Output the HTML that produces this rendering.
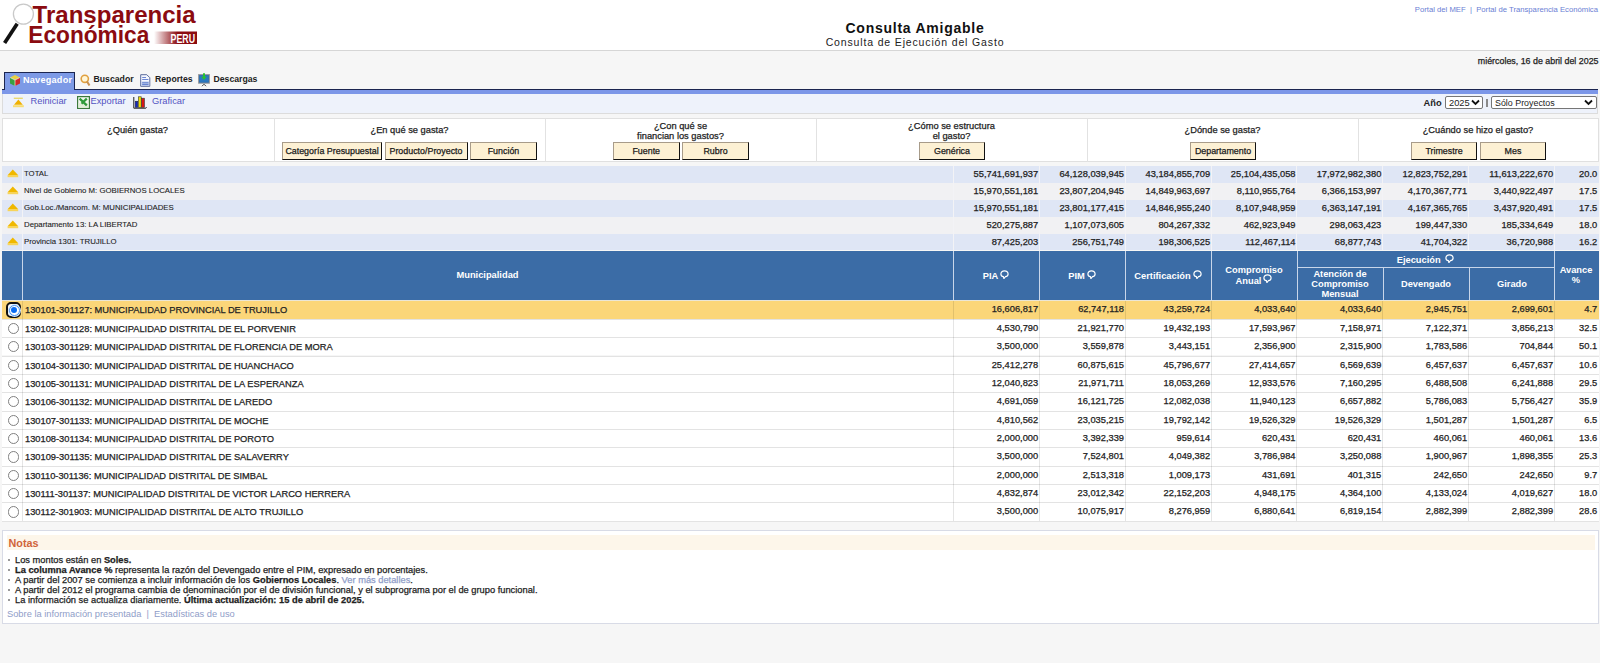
<!DOCTYPE html>
<html><head><meta charset="utf-8"><style>
*{box-sizing:border-box}
html,body{margin:0;padding:0}
body{width:1600px;height:663px;position:relative;overflow:hidden;background:#f6f6f6;font-family:"Liberation Sans",sans-serif;color:#222}
.dlbl,.dnum,.snum,.fq,.btn,.nl,#date{-webkit-text-stroke:0.25px currentColor}
.slbl{-webkit-text-stroke:0.1px currentColor}
.abs{position:absolute}
#hdr{position:absolute;left:0;top:0;width:1600px;height:51px;background:#fff;border-bottom:1px solid #d6d6d6}
#title{position:absolute;left:815px;width:200px;top:19.5px;text-align:center;font-weight:bold;font-size:14px;letter-spacing:0.75px;color:#111}
#subtitle{position:absolute;left:765px;width:300px;top:36px;text-align:center;font-size:10.5px;letter-spacing:0.85px;color:#222}
#links{position:absolute;right:2px;top:4.6px;font-size:7.7px;color:#6a7ed4}
#date{position:absolute;right:1.5px;top:56px;font-size:8.87px;color:#222}
.tab{position:absolute;top:72px;height:18px;font-size:8.7px;font-weight:bold;line-height:15px;color:#222}
#tabnav{left:4px;width:71px;background:#7d9ae6;font-size:9.1px;letter-spacing:0.25px;border:1px solid #1b2550;border-bottom:none;color:#fff}
#tabline{position:absolute;left:2px;top:89px;width:1596px;height:1px;background:#1b2550}
#band{position:absolute;left:2px;top:90px;width:1596px;height:3.5px;background:#7b96e8}
#toolbar{position:absolute;left:2px;top:93.5px;width:1596px;height:20px;background:#eef2fb;border:1px solid #dcdcdc;border-top:none}
.tl{position:absolute;top:95px;font-size:9.3px;color:#5252c2;line-height:12px}
#filters{position:absolute;left:2px;top:118px;width:1596.5px;height:43.5px;background:#fff;border:1px solid #e0e0e0}
.fsep{position:absolute;top:118px;height:43.5px;width:1px;background:#e2e2e2}
.fq{position:absolute;top:124px;text-align:center;font-size:9.3px;line-height:10px;color:#222}
.btn{position:absolute;top:141.5px;height:18.5px;background:#fdf1d4;border:1px solid;border-color:#a89c8a #111 #111 #a89c8a;font-size:8.9px;text-align:center;line-height:16px;color:#1a1a1a}
.srow{position:absolute;left:2px;width:1596.5px}
.sico{position:absolute;left:7.5px;width:11px;height:6px}
.sico:before{content:"";position:absolute;left:0;top:0;border-left:5.5px solid transparent;border-right:5.5px solid transparent;border-bottom:4px solid #f0b400}
.sico:after{content:"";position:absolute;left:0;top:4.5px;width:11px;height:1.8px;background:#f0b400}
.slbl{position:absolute;left:24px;font-size:7.8px;color:#222}
.snum{position:absolute;text-align:right;padding-right:1.3px;font-size:9.3px;color:#222}
.svl{position:absolute;top:166.3px;height:84px;width:1px;background:#f3f3f6}
.drow{position:absolute;left:2px;width:1596.5px}
.dlbl{position:absolute;left:25px;font-size:9.3px;color:#222}
.dnum{position:absolute;text-align:right;padding-right:1.3px;font-size:9.3px;color:#222}
.dvl{position:absolute;top:300.4px;height:220.4px;width:1px;background:rgba(0,0,0,0.1)}
.radio{position:absolute;left:7.8px;width:11.2px;height:11.2px;border-radius:50%;border:1px solid #808080;background:#fff}
.radio.sel{left:6.2px;width:15.2px;height:15.2px;border-radius:5px;border:2.3px solid #111;background:#fff}
.radio.sel:before{content:"";position:absolute;left:0.6px;top:0.6px;width:9.2px;height:9.2px;border-radius:50%;border:1px solid #4a94ee;box-shadow:0 0 0 1px #cfe6ff;background:#fff}
.radio.sel:after{content:"";position:absolute;left:3.1px;top:3.1px;width:6px;height:6px;border-radius:50%;background:#0a6cf0}
#thead{position:absolute;left:2px;top:250.5px;width:1596.5px;height:50px;background:#3b6ca6}
.th{position:absolute;color:#fff;font-weight:bold;font-size:9.3px;text-align:center;line-height:10px}
.thvl{position:absolute;width:1px;background:#c8d6ea}
#notes{position:absolute;left:2px;top:529.5px;width:1596.5px;height:94px;background:#fff;border:1px solid #d8dbe6}
#nhead{position:absolute;left:6.5px;top:535px;width:1588px;height:15px;background:#fdf6ea}
#ntitle{position:absolute;left:8.5px;top:535.5px;font-size:10.8px;font-weight:bold;color:#d0643a;line-height:14px}
.nl{position:absolute;left:15px;font-size:9.3px;color:#222;line-height:10px;white-space:nowrap}
.nb{position:absolute;left:8px;width:2.2px;height:2.2px;background:#999}
.nlinks{position:absolute;left:7px;top:609px;font-size:9.3px;color:#8f9dc8;line-height:11px;white-space:nowrap}
.bub{display:inline-block;vertical-align:baseline;margin-left:2px;position:relative;top:-0.3px}

</style></head><body>
<div id="hdr"></div>
<!-- logo -->
<svg class="abs" style="left:0;top:0" width="205" height="50" viewBox="0 0 205 50">
  <circle cx="23.4" cy="14.1" r="10" fill="#fff" stroke="#c9c9c9" stroke-width="1.3"/>
  <line x1="17.2" y1="23.8" x2="4.6" y2="43" stroke="#111" stroke-width="3.7" stroke-linecap="butt"/>
  <text x="32.6" y="23.1" font-family="Liberation Sans" font-weight="bold" font-size="24.5" fill="#8b0b10" textLength="163" lengthAdjust="spacingAndGlyphs">Transparencia</text>
  <text x="28.3" y="43.1" font-family="Liberation Sans" font-weight="bold" font-size="24.5" fill="#8b0b10" textLength="121" lengthAdjust="spacingAndGlyphs">Económica</text>
  <defs><linearGradient id="pg" x1="0" x2="1" y1="0" y2="0"><stop offset="0" stop-color="#8b0b10" stop-opacity="0"/><stop offset="0.55" stop-color="#8b0b10" stop-opacity="1"/></linearGradient></defs>
  <rect x="154" y="31.5" width="43" height="12.5" fill="url(#pg)"/>
  <text x="170.6" y="42.6" font-family="Liberation Sans" font-weight="bold" font-size="12" fill="#fff" textLength="24.5" lengthAdjust="spacingAndGlyphs">PERU</text>
</svg>
<div id="title">Consulta Amigable</div>
<div id="subtitle">Consulta de Ejecución del Gasto</div>
<div id="links">Portal del MEF &nbsp;|&nbsp; Portal de Transparencia Económica</div>
<div id="date">miércoles, 16 de abril del 2025</div>

<div id="tabline"></div>
<div id="tabnav" class="tab"><span style="position:absolute;left:18px;top:0">Navegador</span></div>
<!-- navegador cube icon -->
<svg class="abs" style="left:9px;top:74px" width="12" height="13" viewBox="0 0 12 13">
  <polygon points="6,1 11,3.5 6,6 1,3.5" fill="#e8d040"/>
  <polygon points="1,3.5 6,6 6,12 1,9.5" fill="#3aa040"/>
  <polygon points="11,3.5 6,6 6,12 11,9.5" fill="#d02828"/><path d="M6,6 L1.2,3.6 M6,6 L10.8,3.6 M6,6 V12" stroke="#fff" stroke-width="0.7" opacity="0.85"/>
</svg>
<div class="tab" style="left:93.5px">Buscador</div>
<svg class="abs" style="left:80px;top:74px" width="11" height="13" viewBox="0 0 11 13">
  <circle cx="4.8" cy="4.8" r="3.6" fill="#fff6d8" stroke="#e0a040" stroke-width="1.6"/>
  <line x1="7" y1="7.5" x2="9.5" y2="11.5" stroke="#c89050" stroke-width="2"/>
</svg>
<div class="tab" style="left:155px">Reportes</div>
<svg class="abs" style="left:140px;top:74px" width="11" height="13" viewBox="0 0 11 13"><path d="M0.7 0.7 H6.8 L9.8 3.7 V12.3 H0.7 Z" fill="#f4f7ff" stroke="#5a6a9a" stroke-width="1"/><rect x="1.4" y="7.5" width="7.8" height="4.3" fill="#b8c8ec"/><path d="M2.2 3.5 H6 M2.2 5.5 H8.4 M2.2 8.8 H8.4 M2.2 10.6 H8.4" stroke="#4a6ac8" stroke-width="0.8"/></svg>
<div class="tab" style="left:213.5px">Descargas</div>
<svg class="abs" style="left:198px;top:73px" width="12" height="15" viewBox="0 0 12 15"><rect x="0.6" y="1.6" width="10.8" height="8.6" fill="#2c6cb0" stroke="#9a9a9a" stroke-width="1"/><rect x="1.6" y="2.8" width="8.8" height="6" fill="#2a78c0"/><path d="M5 0.2 H7 V3.8 H8.8 L6 7 L3.2 3.8 H5 Z" fill="#28c030"/><path d="M4 13.2 L6 11.2 L8 13.2" stroke="#444" fill="none" stroke-width="1"/></svg>
<div id="band"></div>
<div id="toolbar"></div>
<svg class="abs" style="left:12px;top:97px" width="13" height="12" viewBox="0 0 13 12"><rect x="1.8" y="0.6" width="9" height="1.4" fill="#e8d870"/><polygon points="2,7.7 6.4,2.6 10.8,7.7" fill="#f0b000"/><rect x="1" y="8.2" width="10.8" height="2" fill="#f8dc70"/></svg>
<div class="tl" style="left:30.5px">Reiniciar</div>
<svg class="abs" style="left:77px;top:96px" width="13" height="13" viewBox="0 0 13 13"><rect x="0.6" y="0.6" width="11.8" height="11.8" fill="#f2f8ee" stroke="#3c7a3c" stroke-width="1.2"/><rect x="1.5" y="7" width="10" height="4.8" fill="#e0eed8"/><path d="M2.6 2.6 L9.8 9.4 M9.8 2.6 L4.5 7.6" stroke="#2f9a3a" stroke-width="2.2"/></svg>
<div class="tl" style="left:90.5px">Exportar</div>
<svg class="abs" style="left:133px;top:96px" width="14" height="13" viewBox="0 0 14 13"><path d="M0.8 1 V12.2 H12.8 L13.5 11.2" stroke="#222" fill="none" stroke-width="1"/><rect x="2.2" y="5.2" width="2.6" height="6.2" fill="#1428c8" stroke="#222" stroke-width="0.5"/><rect x="5.4" y="0.8" width="2.8" height="10.6" fill="#f0e000" stroke="#333" stroke-width="0.6"/><rect x="8.6" y="2.2" width="2.8" height="9.2" fill="#d81818" stroke="#333" stroke-width="0.6"/></svg>
<div class="tl" style="left:152px">Graficar</div>
<div class="abs" style="left:1423.5px;top:97px;font-size:9.3px;font-weight:bold;line-height:12px;color:#222">Año</div>
<div class="abs" style="left:1445px;top:95.5px;width:38px;height:13px;background:#fff;border:1px solid #767676;border-radius:2px;font-size:9.3px;line-height:12px;padding-left:3px;color:#222">2025<svg style="position:absolute;right:2.5px;top:2.5px" width="9" height="7" viewBox="0 0 9 7"><polyline points="1,1.5 4.5,5 8,1.5" fill="none" stroke="#111" stroke-width="1.8"/></svg></div>
<div class="abs" style="left:1486px;top:99px;width:2px;height:8px;background:#8a8a8a"></div>
<div class="abs" style="left:1491px;top:95.5px;width:106px;height:13px;background:#fff;border:1px solid #767676;border-radius:2px;font-size:8.9px;line-height:12px;padding-left:3px;color:#222">Sólo Proyectos<svg style="position:absolute;right:3.5px;top:2.5px" width="9" height="7" viewBox="0 0 9 7"><polyline points="1,1.5 4.5,5 8,1.5" fill="none" stroke="#111" stroke-width="1.8"/></svg></div>

<div id="filters"></div>
<div class="fsep" style="left:273.5px"></div>
<div class="fsep" style="left:544.5px"></div>
<div class="fsep" style="left:816px"></div>
<div class="fsep" style="left:1087px"></div>
<div class="fsep" style="left:1358px"></div>
<div class="fq" style="left:2px;width:271px;top:125px">¿Quién gasta?</div>
<div class="fq" style="left:274px;width:271px;top:125px">¿En qué se gasta?</div>
<div class="btn" style="left:282px;width:100px">Categoría Presupuestal</div>
<div class="btn" style="left:384.5px;width:83px">Producto/Proyecto</div>
<div class="btn" style="left:470px;width:67px">Función</div>
<div class="fq" style="left:545px;width:271px;top:120.5px">¿Con qué se<br>financian los gastos?</div>
<div class="btn" style="left:613px;width:66.5px">Fuente</div>
<div class="btn" style="left:682px;width:67px">Rubro</div>
<div class="fq" style="left:816px;width:271px;top:120.5px">¿Cómo se estructura<br>el gasto?</div>
<div class="btn" style="left:919px;width:66px">Genérica</div>
<div class="fq" style="left:1087px;width:271px;top:125px">¿Dónde se gasta?</div>
<div class="btn" style="left:1190px;width:66px">Departamento</div>
<div class="fq" style="left:1358px;width:240px;top:125px">¿Cuándo se hizo el gasto?</div>
<div class="btn" style="left:1411px;width:66px">Trimestre</div>
<div class="btn" style="left:1480px;width:66px">Mes</div>

<div class="srow" style="top:166.30px;height:16.84px;background:#dfe6f5"></div><svg class="abs" style="left:7px;top:169.30px" width="12" height="9" viewBox="0 0 12 9"><polygon points="0.8,6 5.8,0.6 11,6" fill="#f0b800"/><rect x="0.6" y="6" width="10.6" height="2.2" fill="#f7d45a"/></svg><div class="slbl" style="top:166.30px;height:16.84px;line-height:15.64px">TOTAL</div><div class="snum" style="left:953.5px;width:86.0px;top:166.3px;height:16.84px;line-height:17.34px">55,741,691,937</div><div class="snum" style="left:1039.5px;width:85.79999999999995px;top:166.3px;height:16.84px;line-height:17.34px">64,128,039,945</div><div class="snum" style="left:1125.3px;width:86.10000000000014px;top:166.3px;height:16.84px;line-height:17.34px">43,184,855,709</div><div class="snum" style="left:1211.4px;width:85.39999999999986px;top:166.3px;height:16.84px;line-height:17.34px">25,104,435,058</div><div class="snum" style="left:1296.8px;width:85.79999999999995px;top:166.3px;height:16.84px;line-height:17.34px">17,972,982,380</div><div class="snum" style="left:1382.6px;width:85.90000000000009px;top:166.3px;height:16.84px;line-height:17.34px">12,823,752,291</div><div class="snum" style="left:1468.5px;width:85.90000000000009px;top:166.3px;height:16.84px;line-height:17.34px">11,613,222,670</div><div class="snum" style="left:1554.4px;width:44.09999999999991px;top:166.3px;height:16.84px;line-height:17.34px">20.0</div><div class="srow" style="top:183.14px;height:16.84px;background:#f1f1f3"></div><svg class="abs" style="left:7px;top:186.14px" width="12" height="9" viewBox="0 0 12 9"><polygon points="0.8,6 5.8,0.6 11,6" fill="#f0b800"/><rect x="0.6" y="6" width="10.6" height="2.2" fill="#f7d45a"/></svg><div class="slbl" style="top:183.14px;height:16.84px;line-height:15.64px">Nivel de Gobierno M: GOBIERNOS LOCALES</div><div class="snum" style="left:953.5px;width:86.0px;top:183.14px;height:16.84px;line-height:17.34px">15,970,551,181</div><div class="snum" style="left:1039.5px;width:85.79999999999995px;top:183.14px;height:16.84px;line-height:17.34px">23,807,204,945</div><div class="snum" style="left:1125.3px;width:86.10000000000014px;top:183.14px;height:16.84px;line-height:17.34px">14,849,963,697</div><div class="snum" style="left:1211.4px;width:85.39999999999986px;top:183.14px;height:16.84px;line-height:17.34px">8,110,955,764</div><div class="snum" style="left:1296.8px;width:85.79999999999995px;top:183.14px;height:16.84px;line-height:17.34px">6,366,153,997</div><div class="snum" style="left:1382.6px;width:85.90000000000009px;top:183.14px;height:16.84px;line-height:17.34px">4,170,367,771</div><div class="snum" style="left:1468.5px;width:85.90000000000009px;top:183.14px;height:16.84px;line-height:17.34px">3,440,922,497</div><div class="snum" style="left:1554.4px;width:44.09999999999991px;top:183.14px;height:16.84px;line-height:17.34px">17.5</div><div class="srow" style="top:199.98px;height:16.84px;background:#dfe6f5"></div><svg class="abs" style="left:7px;top:202.98px" width="12" height="9" viewBox="0 0 12 9"><polygon points="0.8,6 5.8,0.6 11,6" fill="#f0b800"/><rect x="0.6" y="6" width="10.6" height="2.2" fill="#f7d45a"/></svg><div class="slbl" style="top:199.98px;height:16.84px;line-height:15.64px">Gob.Loc./Mancom. M: MUNICIPALIDADES</div><div class="snum" style="left:953.5px;width:86.0px;top:199.98px;height:16.84px;line-height:17.34px">15,970,551,181</div><div class="snum" style="left:1039.5px;width:85.79999999999995px;top:199.98px;height:16.84px;line-height:17.34px">23,801,177,415</div><div class="snum" style="left:1125.3px;width:86.10000000000014px;top:199.98px;height:16.84px;line-height:17.34px">14,846,955,240</div><div class="snum" style="left:1211.4px;width:85.39999999999986px;top:199.98px;height:16.84px;line-height:17.34px">8,107,948,959</div><div class="snum" style="left:1296.8px;width:85.79999999999995px;top:199.98px;height:16.84px;line-height:17.34px">6,363,147,191</div><div class="snum" style="left:1382.6px;width:85.90000000000009px;top:199.98px;height:16.84px;line-height:17.34px">4,167,365,765</div><div class="snum" style="left:1468.5px;width:85.90000000000009px;top:199.98px;height:16.84px;line-height:17.34px">3,437,920,491</div><div class="snum" style="left:1554.4px;width:44.09999999999991px;top:199.98px;height:16.84px;line-height:17.34px">17.5</div><div class="srow" style="top:216.82px;height:16.84px;background:#f1f1f3"></div><svg class="abs" style="left:7px;top:219.82px" width="12" height="9" viewBox="0 0 12 9"><polygon points="0.8,6 5.8,0.6 11,6" fill="#f0b800"/><rect x="0.6" y="6" width="10.6" height="2.2" fill="#f7d45a"/></svg><div class="slbl" style="top:216.82px;height:16.84px;line-height:15.64px">Departamento 13: LA LIBERTAD</div><div class="snum" style="left:953.5px;width:86.0px;top:216.82px;height:16.84px;line-height:17.34px">520,275,887</div><div class="snum" style="left:1039.5px;width:85.79999999999995px;top:216.82px;height:16.84px;line-height:17.34px">1,107,073,605</div><div class="snum" style="left:1125.3px;width:86.10000000000014px;top:216.82px;height:16.84px;line-height:17.34px">804,267,332</div><div class="snum" style="left:1211.4px;width:85.39999999999986px;top:216.82px;height:16.84px;line-height:17.34px">462,923,949</div><div class="snum" style="left:1296.8px;width:85.79999999999995px;top:216.82px;height:16.84px;line-height:17.34px">298,063,423</div><div class="snum" style="left:1382.6px;width:85.90000000000009px;top:216.82px;height:16.84px;line-height:17.34px">199,447,330</div><div class="snum" style="left:1468.5px;width:85.90000000000009px;top:216.82px;height:16.84px;line-height:17.34px">185,334,649</div><div class="snum" style="left:1554.4px;width:44.09999999999991px;top:216.82px;height:16.84px;line-height:17.34px">18.0</div><div class="srow" style="top:233.66px;height:16.84px;background:#dfe6f5"></div><svg class="abs" style="left:7px;top:236.66px" width="12" height="9" viewBox="0 0 12 9"><polygon points="0.8,6 5.8,0.6 11,6" fill="#f0b800"/><rect x="0.6" y="6" width="10.6" height="2.2" fill="#f7d45a"/></svg><div class="slbl" style="top:233.66px;height:16.84px;line-height:15.64px">Provincia 1301: TRUJILLO</div><div class="snum" style="left:953.5px;width:86.0px;top:233.66px;height:16.84px;line-height:17.34px">87,425,203</div><div class="snum" style="left:1039.5px;width:85.79999999999995px;top:233.66px;height:16.84px;line-height:17.34px">256,751,749</div><div class="snum" style="left:1125.3px;width:86.10000000000014px;top:233.66px;height:16.84px;line-height:17.34px">198,306,525</div><div class="snum" style="left:1211.4px;width:85.39999999999986px;top:233.66px;height:16.84px;line-height:17.34px">112,467,114</div><div class="snum" style="left:1296.8px;width:85.79999999999995px;top:233.66px;height:16.84px;line-height:17.34px">68,877,743</div><div class="snum" style="left:1382.6px;width:85.90000000000009px;top:233.66px;height:16.84px;line-height:17.34px">41,704,322</div><div class="snum" style="left:1468.5px;width:85.90000000000009px;top:233.66px;height:16.84px;line-height:17.34px">36,720,988</div><div class="snum" style="left:1554.4px;width:44.09999999999991px;top:233.66px;height:16.84px;line-height:17.34px">16.2</div><div class="svl" style="left:22.0px"></div><div class="svl" style="left:953.0px"></div><div class="svl" style="left:1039.0px"></div><div class="svl" style="left:1124.8px"></div><div class="svl" style="left:1210.9px"></div><div class="svl" style="left:1296.3px"></div><div class="svl" style="left:1382.1px"></div><div class="svl" style="left:1468.0px"></div><div class="svl" style="left:1553.9px"></div>

<div id="thead"></div>
<div class="thvl" style="left:22px;top:250.5px;height:50px"></div>
<div class="thvl" style="left:953px;top:250.5px;height:50px"></div>
<div class="thvl" style="left:1039px;top:250.5px;height:50px"></div>
<div class="thvl" style="left:1125px;top:250.5px;height:50px"></div>
<div class="thvl" style="left:1211px;top:250.5px;height:50px"></div>
<div class="thvl" style="left:1296.5px;top:250.5px;height:50px"></div>
<div class="thvl" style="left:1382.5px;top:267.5px;height:33px"></div>
<div class="thvl" style="left:1468.5px;top:267.5px;height:33px"></div>
<div class="thvl" style="left:1554px;top:250.5px;height:50px"></div>
<div class="abs" style="left:1297px;top:267px;width:257px;height:1px;background:#c8d6ea"></div>
<div class="th" style="left:22px;width:931px;top:270px">Municipalidad</div>
<div class="th" style="left:953px;width:86px;top:270px">PIA<svg class="bub" width="9" height="9" viewBox="0 0 9 9"><path d="M4.5,0.9 C2.3,0.9 0.9,2.3 0.9,3.9 C0.9,5.3 1.9,6.4 3.4,6.7 L3.9,8.6 L5.4,6.7 C7,6.4 8.1,5.3 8.1,3.9 C8.1,2.3 6.7,0.9 4.5,0.9 Z" fill="none" stroke="#fff" stroke-width="1.2"/></svg></div>
<div class="th" style="left:1039px;width:86px;top:270px">PIM<svg class="bub" width="9" height="9" viewBox="0 0 9 9"><path d="M4.5,0.9 C2.3,0.9 0.9,2.3 0.9,3.9 C0.9,5.3 1.9,6.4 3.4,6.7 L3.9,8.6 L5.4,6.7 C7,6.4 8.1,5.3 8.1,3.9 C8.1,2.3 6.7,0.9 4.5,0.9 Z" fill="none" stroke="#fff" stroke-width="1.2"/></svg></div>
<div class="th" style="left:1125px;width:86px;top:270px">Certificación<svg class="bub" width="9" height="9" viewBox="0 0 9 9"><path d="M4.5,0.9 C2.3,0.9 0.9,2.3 0.9,3.9 C0.9,5.3 1.9,6.4 3.4,6.7 L3.9,8.6 L5.4,6.7 C7,6.4 8.1,5.3 8.1,3.9 C8.1,2.3 6.7,0.9 4.5,0.9 Z" fill="none" stroke="#fff" stroke-width="1.2"/></svg></div>
<div class="th" style="left:1211px;width:86px;top:264.5px;line-height:10px">Compromiso<br>Anual<svg class="bub" width="9" height="9" viewBox="0 0 9 9"><path d="M4.5,0.9 C2.3,0.9 0.9,2.3 0.9,3.9 C0.9,5.3 1.9,6.4 3.4,6.7 L3.9,8.6 L5.4,6.7 C7,6.4 8.1,5.3 8.1,3.9 C8.1,2.3 6.7,0.9 4.5,0.9 Z" fill="none" stroke="#fff" stroke-width="1.2"/></svg></div>
<div class="th" style="left:1297px;width:257px;top:254px">Ejecución&nbsp;<svg class="bub" width="9" height="9" viewBox="0 0 9 9"><path d="M4.5,0.9 C2.3,0.9 0.9,2.3 0.9,3.9 C0.9,5.3 1.9,6.4 3.4,6.7 L3.9,8.6 L5.4,6.7 C7,6.4 8.1,5.3 8.1,3.9 C8.1,2.3 6.7,0.9 4.5,0.9 Z" fill="none" stroke="#fff" stroke-width="1.2"/></svg></div>
<div class="th" style="left:1297px;width:86px;top:269px">Atención de<br>Compromiso<br>Mensual</div>
<div class="th" style="left:1383px;width:86px;top:279px">Devengado</div>
<div class="th" style="left:1469px;width:86px;top:279px">Girado</div>
<div class="th" style="left:1554px;width:44px;top:265px">Avance<br>%</div>

<div class="drow" style="top:300.40px;height:18.37px;background:#fbd679;"></div><div class="radio sel" style="top:302.40px"></div><div class="dlbl" style="top:300.40px;height:18.37px;line-height:20.37px">130101-301127: MUNICIPALIDAD PROVINCIAL DE TRUJILLO</div><div class="dnum" style="left:953.5px;width:86.0px;top:300.4px;height:18.37px;line-height:19.87px">16,606,817</div><div class="dnum" style="left:1039.5px;width:85.79999999999995px;top:300.4px;height:18.37px;line-height:19.87px">62,747,118</div><div class="dnum" style="left:1125.3px;width:86.10000000000014px;top:300.4px;height:18.37px;line-height:19.87px">43,259,724</div><div class="dnum" style="left:1211.4px;width:85.39999999999986px;top:300.4px;height:18.37px;line-height:19.87px">4,033,640</div><div class="dnum" style="left:1296.8px;width:85.79999999999995px;top:300.4px;height:18.37px;line-height:19.87px">4,033,640</div><div class="dnum" style="left:1382.6px;width:85.90000000000009px;top:300.4px;height:18.37px;line-height:19.87px">2,945,751</div><div class="dnum" style="left:1468.5px;width:85.90000000000009px;top:300.4px;height:18.37px;line-height:19.87px">2,699,601</div><div class="dnum" style="left:1554.4px;width:44.09999999999991px;top:300.4px;height:18.37px;line-height:19.87px">4.7</div><div class="drow" style="top:318.77px;height:18.37px;background:#ffffff;border-top:1px solid #e3e3e3"></div><div class="radio" style="top:322.77px"></div><div class="dlbl" style="top:318.77px;height:18.37px;line-height:20.37px">130102-301128: MUNICIPALIDAD DISTRITAL DE EL PORVENIR</div><div class="dnum" style="left:953.5px;width:86.0px;top:318.77px;height:18.37px;line-height:19.87px">4,530,790</div><div class="dnum" style="left:1039.5px;width:85.79999999999995px;top:318.77px;height:18.37px;line-height:19.87px">21,921,770</div><div class="dnum" style="left:1125.3px;width:86.10000000000014px;top:318.77px;height:18.37px;line-height:19.87px">19,432,193</div><div class="dnum" style="left:1211.4px;width:85.39999999999986px;top:318.77px;height:18.37px;line-height:19.87px">17,593,967</div><div class="dnum" style="left:1296.8px;width:85.79999999999995px;top:318.77px;height:18.37px;line-height:19.87px">7,158,971</div><div class="dnum" style="left:1382.6px;width:85.90000000000009px;top:318.77px;height:18.37px;line-height:19.87px">7,122,371</div><div class="dnum" style="left:1468.5px;width:85.90000000000009px;top:318.77px;height:18.37px;line-height:19.87px">3,856,213</div><div class="dnum" style="left:1554.4px;width:44.09999999999991px;top:318.77px;height:18.37px;line-height:19.87px">32.5</div><div class="drow" style="top:337.14px;height:18.37px;background:#ffffff;border-top:1px solid #e3e3e3"></div><div class="radio" style="top:341.14px"></div><div class="dlbl" style="top:337.14px;height:18.37px;line-height:20.37px">130103-301129: MUNICIPALIDAD DISTRITAL DE FLORENCIA DE MORA</div><div class="dnum" style="left:953.5px;width:86.0px;top:337.14px;height:18.37px;line-height:19.87px">3,500,000</div><div class="dnum" style="left:1039.5px;width:85.79999999999995px;top:337.14px;height:18.37px;line-height:19.87px">3,559,878</div><div class="dnum" style="left:1125.3px;width:86.10000000000014px;top:337.14px;height:18.37px;line-height:19.87px">3,443,151</div><div class="dnum" style="left:1211.4px;width:85.39999999999986px;top:337.14px;height:18.37px;line-height:19.87px">2,356,900</div><div class="dnum" style="left:1296.8px;width:85.79999999999995px;top:337.14px;height:18.37px;line-height:19.87px">2,315,900</div><div class="dnum" style="left:1382.6px;width:85.90000000000009px;top:337.14px;height:18.37px;line-height:19.87px">1,783,586</div><div class="dnum" style="left:1468.5px;width:85.90000000000009px;top:337.14px;height:18.37px;line-height:19.87px">704,844</div><div class="dnum" style="left:1554.4px;width:44.09999999999991px;top:337.14px;height:18.37px;line-height:19.87px">50.1</div><div class="drow" style="top:355.51px;height:18.37px;background:#ffffff;border-top:1px solid #e3e3e3"></div><div class="radio" style="top:359.51px"></div><div class="dlbl" style="top:355.51px;height:18.37px;line-height:20.37px">130104-301130: MUNICIPALIDAD DISTRITAL DE HUANCHACO</div><div class="dnum" style="left:953.5px;width:86.0px;top:355.51px;height:18.37px;line-height:19.87px">25,412,278</div><div class="dnum" style="left:1039.5px;width:85.79999999999995px;top:355.51px;height:18.37px;line-height:19.87px">60,875,615</div><div class="dnum" style="left:1125.3px;width:86.10000000000014px;top:355.51px;height:18.37px;line-height:19.87px">45,796,677</div><div class="dnum" style="left:1211.4px;width:85.39999999999986px;top:355.51px;height:18.37px;line-height:19.87px">27,414,657</div><div class="dnum" style="left:1296.8px;width:85.79999999999995px;top:355.51px;height:18.37px;line-height:19.87px">6,569,639</div><div class="dnum" style="left:1382.6px;width:85.90000000000009px;top:355.51px;height:18.37px;line-height:19.87px">6,457,637</div><div class="dnum" style="left:1468.5px;width:85.90000000000009px;top:355.51px;height:18.37px;line-height:19.87px">6,457,637</div><div class="dnum" style="left:1554.4px;width:44.09999999999991px;top:355.51px;height:18.37px;line-height:19.87px">10.6</div><div class="drow" style="top:373.88px;height:18.37px;background:#ffffff;border-top:1px solid #e3e3e3"></div><div class="radio" style="top:377.88px"></div><div class="dlbl" style="top:373.88px;height:18.37px;line-height:20.37px">130105-301131: MUNICIPALIDAD DISTRITAL DE LA ESPERANZA</div><div class="dnum" style="left:953.5px;width:86.0px;top:373.88px;height:18.37px;line-height:19.87px">12,040,823</div><div class="dnum" style="left:1039.5px;width:85.79999999999995px;top:373.88px;height:18.37px;line-height:19.87px">21,971,711</div><div class="dnum" style="left:1125.3px;width:86.10000000000014px;top:373.88px;height:18.37px;line-height:19.87px">18,053,269</div><div class="dnum" style="left:1211.4px;width:85.39999999999986px;top:373.88px;height:18.37px;line-height:19.87px">12,933,576</div><div class="dnum" style="left:1296.8px;width:85.79999999999995px;top:373.88px;height:18.37px;line-height:19.87px">7,160,295</div><div class="dnum" style="left:1382.6px;width:85.90000000000009px;top:373.88px;height:18.37px;line-height:19.87px">6,488,508</div><div class="dnum" style="left:1468.5px;width:85.90000000000009px;top:373.88px;height:18.37px;line-height:19.87px">6,241,888</div><div class="dnum" style="left:1554.4px;width:44.09999999999991px;top:373.88px;height:18.37px;line-height:19.87px">29.5</div><div class="drow" style="top:392.25px;height:18.37px;background:#ffffff;border-top:1px solid #e3e3e3"></div><div class="radio" style="top:396.25px"></div><div class="dlbl" style="top:392.25px;height:18.37px;line-height:20.37px">130106-301132: MUNICIPALIDAD DISTRITAL DE LAREDO</div><div class="dnum" style="left:953.5px;width:86.0px;top:392.25px;height:18.37px;line-height:19.87px">4,691,059</div><div class="dnum" style="left:1039.5px;width:85.79999999999995px;top:392.25px;height:18.37px;line-height:19.87px">16,121,725</div><div class="dnum" style="left:1125.3px;width:86.10000000000014px;top:392.25px;height:18.37px;line-height:19.87px">12,082,038</div><div class="dnum" style="left:1211.4px;width:85.39999999999986px;top:392.25px;height:18.37px;line-height:19.87px">11,940,123</div><div class="dnum" style="left:1296.8px;width:85.79999999999995px;top:392.25px;height:18.37px;line-height:19.87px">6,657,882</div><div class="dnum" style="left:1382.6px;width:85.90000000000009px;top:392.25px;height:18.37px;line-height:19.87px">5,786,083</div><div class="dnum" style="left:1468.5px;width:85.90000000000009px;top:392.25px;height:18.37px;line-height:19.87px">5,756,427</div><div class="dnum" style="left:1554.4px;width:44.09999999999991px;top:392.25px;height:18.37px;line-height:19.87px">35.9</div><div class="drow" style="top:410.62px;height:18.37px;background:#ffffff;border-top:1px solid #e3e3e3"></div><div class="radio" style="top:414.62px"></div><div class="dlbl" style="top:410.62px;height:18.37px;line-height:20.37px">130107-301133: MUNICIPALIDAD DISTRITAL DE MOCHE</div><div class="dnum" style="left:953.5px;width:86.0px;top:410.62px;height:18.37px;line-height:19.87px">4,810,562</div><div class="dnum" style="left:1039.5px;width:85.79999999999995px;top:410.62px;height:18.37px;line-height:19.87px">23,035,215</div><div class="dnum" style="left:1125.3px;width:86.10000000000014px;top:410.62px;height:18.37px;line-height:19.87px">19,792,142</div><div class="dnum" style="left:1211.4px;width:85.39999999999986px;top:410.62px;height:18.37px;line-height:19.87px">19,526,329</div><div class="dnum" style="left:1296.8px;width:85.79999999999995px;top:410.62px;height:18.37px;line-height:19.87px">19,526,329</div><div class="dnum" style="left:1382.6px;width:85.90000000000009px;top:410.62px;height:18.37px;line-height:19.87px">1,501,287</div><div class="dnum" style="left:1468.5px;width:85.90000000000009px;top:410.62px;height:18.37px;line-height:19.87px">1,501,287</div><div class="dnum" style="left:1554.4px;width:44.09999999999991px;top:410.62px;height:18.37px;line-height:19.87px">6.5</div><div class="drow" style="top:428.99px;height:18.37px;background:#ffffff;border-top:1px solid #e3e3e3"></div><div class="radio" style="top:432.99px"></div><div class="dlbl" style="top:428.99px;height:18.37px;line-height:20.37px">130108-301134: MUNICIPALIDAD DISTRITAL DE POROTO</div><div class="dnum" style="left:953.5px;width:86.0px;top:428.99px;height:18.37px;line-height:19.87px">2,000,000</div><div class="dnum" style="left:1039.5px;width:85.79999999999995px;top:428.99px;height:18.37px;line-height:19.87px">3,392,339</div><div class="dnum" style="left:1125.3px;width:86.10000000000014px;top:428.99px;height:18.37px;line-height:19.87px">959,614</div><div class="dnum" style="left:1211.4px;width:85.39999999999986px;top:428.99px;height:18.37px;line-height:19.87px">620,431</div><div class="dnum" style="left:1296.8px;width:85.79999999999995px;top:428.99px;height:18.37px;line-height:19.87px">620,431</div><div class="dnum" style="left:1382.6px;width:85.90000000000009px;top:428.99px;height:18.37px;line-height:19.87px">460,061</div><div class="dnum" style="left:1468.5px;width:85.90000000000009px;top:428.99px;height:18.37px;line-height:19.87px">460,061</div><div class="dnum" style="left:1554.4px;width:44.09999999999991px;top:428.99px;height:18.37px;line-height:19.87px">13.6</div><div class="drow" style="top:447.36px;height:18.37px;background:#ffffff;border-top:1px solid #e3e3e3"></div><div class="radio" style="top:451.36px"></div><div class="dlbl" style="top:447.36px;height:18.37px;line-height:20.37px">130109-301135: MUNICIPALIDAD DISTRITAL DE SALAVERRY</div><div class="dnum" style="left:953.5px;width:86.0px;top:447.36px;height:18.37px;line-height:19.87px">3,500,000</div><div class="dnum" style="left:1039.5px;width:85.79999999999995px;top:447.36px;height:18.37px;line-height:19.87px">7,524,801</div><div class="dnum" style="left:1125.3px;width:86.10000000000014px;top:447.36px;height:18.37px;line-height:19.87px">4,049,382</div><div class="dnum" style="left:1211.4px;width:85.39999999999986px;top:447.36px;height:18.37px;line-height:19.87px">3,786,984</div><div class="dnum" style="left:1296.8px;width:85.79999999999995px;top:447.36px;height:18.37px;line-height:19.87px">3,250,088</div><div class="dnum" style="left:1382.6px;width:85.90000000000009px;top:447.36px;height:18.37px;line-height:19.87px">1,900,967</div><div class="dnum" style="left:1468.5px;width:85.90000000000009px;top:447.36px;height:18.37px;line-height:19.87px">1,898,355</div><div class="dnum" style="left:1554.4px;width:44.09999999999991px;top:447.36px;height:18.37px;line-height:19.87px">25.3</div><div class="drow" style="top:465.73px;height:18.37px;background:#ffffff;border-top:1px solid #e3e3e3"></div><div class="radio" style="top:469.73px"></div><div class="dlbl" style="top:465.73px;height:18.37px;line-height:20.37px">130110-301136: MUNICIPALIDAD DISTRITAL DE SIMBAL</div><div class="dnum" style="left:953.5px;width:86.0px;top:465.73px;height:18.37px;line-height:19.87px">2,000,000</div><div class="dnum" style="left:1039.5px;width:85.79999999999995px;top:465.73px;height:18.37px;line-height:19.87px">2,513,318</div><div class="dnum" style="left:1125.3px;width:86.10000000000014px;top:465.73px;height:18.37px;line-height:19.87px">1,009,173</div><div class="dnum" style="left:1211.4px;width:85.39999999999986px;top:465.73px;height:18.37px;line-height:19.87px">431,691</div><div class="dnum" style="left:1296.8px;width:85.79999999999995px;top:465.73px;height:18.37px;line-height:19.87px">401,315</div><div class="dnum" style="left:1382.6px;width:85.90000000000009px;top:465.73px;height:18.37px;line-height:19.87px">242,650</div><div class="dnum" style="left:1468.5px;width:85.90000000000009px;top:465.73px;height:18.37px;line-height:19.87px">242,650</div><div class="dnum" style="left:1554.4px;width:44.09999999999991px;top:465.73px;height:18.37px;line-height:19.87px">9.7</div><div class="drow" style="top:484.10px;height:18.37px;background:#ffffff;border-top:1px solid #e3e3e3"></div><div class="radio" style="top:488.10px"></div><div class="dlbl" style="top:484.10px;height:18.37px;line-height:20.37px">130111-301137: MUNICIPALIDAD DISTRITAL DE VICTOR LARCO HERRERA</div><div class="dnum" style="left:953.5px;width:86.0px;top:484.1px;height:18.37px;line-height:19.87px">4,832,874</div><div class="dnum" style="left:1039.5px;width:85.79999999999995px;top:484.1px;height:18.37px;line-height:19.87px">23,012,342</div><div class="dnum" style="left:1125.3px;width:86.10000000000014px;top:484.1px;height:18.37px;line-height:19.87px">22,152,203</div><div class="dnum" style="left:1211.4px;width:85.39999999999986px;top:484.1px;height:18.37px;line-height:19.87px">4,948,175</div><div class="dnum" style="left:1296.8px;width:85.79999999999995px;top:484.1px;height:18.37px;line-height:19.87px">4,364,100</div><div class="dnum" style="left:1382.6px;width:85.90000000000009px;top:484.1px;height:18.37px;line-height:19.87px">4,133,024</div><div class="dnum" style="left:1468.5px;width:85.90000000000009px;top:484.1px;height:18.37px;line-height:19.87px">4,019,627</div><div class="dnum" style="left:1554.4px;width:44.09999999999991px;top:484.1px;height:18.37px;line-height:19.87px">18.0</div><div class="drow" style="top:502.47px;height:18.37px;background:#ffffff;border-top:1px solid #e3e3e3"></div><div class="radio" style="top:506.47px"></div><div class="dlbl" style="top:502.47px;height:18.37px;line-height:20.37px">130112-301903: MUNICIPALIDAD DISTRITAL DE ALTO TRUJILLO</div><div class="dnum" style="left:953.5px;width:86.0px;top:502.47px;height:18.37px;line-height:19.87px">3,500,000</div><div class="dnum" style="left:1039.5px;width:85.79999999999995px;top:502.47px;height:18.37px;line-height:19.87px">10,075,917</div><div class="dnum" style="left:1125.3px;width:86.10000000000014px;top:502.47px;height:18.37px;line-height:19.87px">8,276,959</div><div class="dnum" style="left:1211.4px;width:85.39999999999986px;top:502.47px;height:18.37px;line-height:19.87px">6,880,641</div><div class="dnum" style="left:1296.8px;width:85.79999999999995px;top:502.47px;height:18.37px;line-height:19.87px">6,819,154</div><div class="dnum" style="left:1382.6px;width:85.90000000000009px;top:502.47px;height:18.37px;line-height:19.87px">2,882,399</div><div class="dnum" style="left:1468.5px;width:85.90000000000009px;top:502.47px;height:18.37px;line-height:19.87px">2,882,399</div><div class="dnum" style="left:1554.4px;width:44.09999999999991px;top:502.47px;height:18.37px;line-height:19.87px">28.6</div><div class="abs" style="left:2px;width:1596.5px;top:520.84px;height:1px;background:#e3e3e3"></div><div class="dvl" style="left:22.0px"></div><div class="dvl" style="left:953.0px"></div><div class="dvl" style="left:1039.0px"></div><div class="dvl" style="left:1124.8px"></div><div class="dvl" style="left:1210.9px"></div><div class="dvl" style="left:1296.3px"></div><div class="dvl" style="left:1382.1px"></div><div class="dvl" style="left:1468.0px"></div><div class="dvl" style="left:1553.9px"></div>
<div class="abs" style="left:2px;width:1596.5px;top:300.2px;height:1px;background:#ebe6d6"></div>

<div id="notes"></div>
<div id="nhead"></div>
<div id="ntitle">Notas</div>
<div class="nb" style="top:559px"></div><div class="nl" style="top:555px">Los montos están en <b>Soles.</b></div>
<div class="nb" style="top:569px"></div><div class="nl" style="top:565px"><b>La columna Avance %</b> representa la razón del Devengado entre el PIM, expresado en porcentajes.</div>
<div class="nb" style="top:579px"></div><div class="nl" style="top:575px">A partir del 2007 se comienza a incluir información de los <b>Gobiernos Locales</b>. <span style="color:#8f9dc8">Ver más detalles</span>.</div>
<div class="nb" style="top:589px"></div><div class="nl" style="top:585px">A partir del 2012 el programa cambia de denominación por el de división funcional, y el subprograma por el de grupo funcional.</div>
<div class="nb" style="top:599px"></div><div class="nl" style="top:595px">La información se actualiza diariamente. <b>Última actualización: 15 de abril de 2025.</b></div>
<div class="nlinks">Sobre la información presentada &nbsp;|&nbsp; Estadísticas de uso</div>

</body></html>
